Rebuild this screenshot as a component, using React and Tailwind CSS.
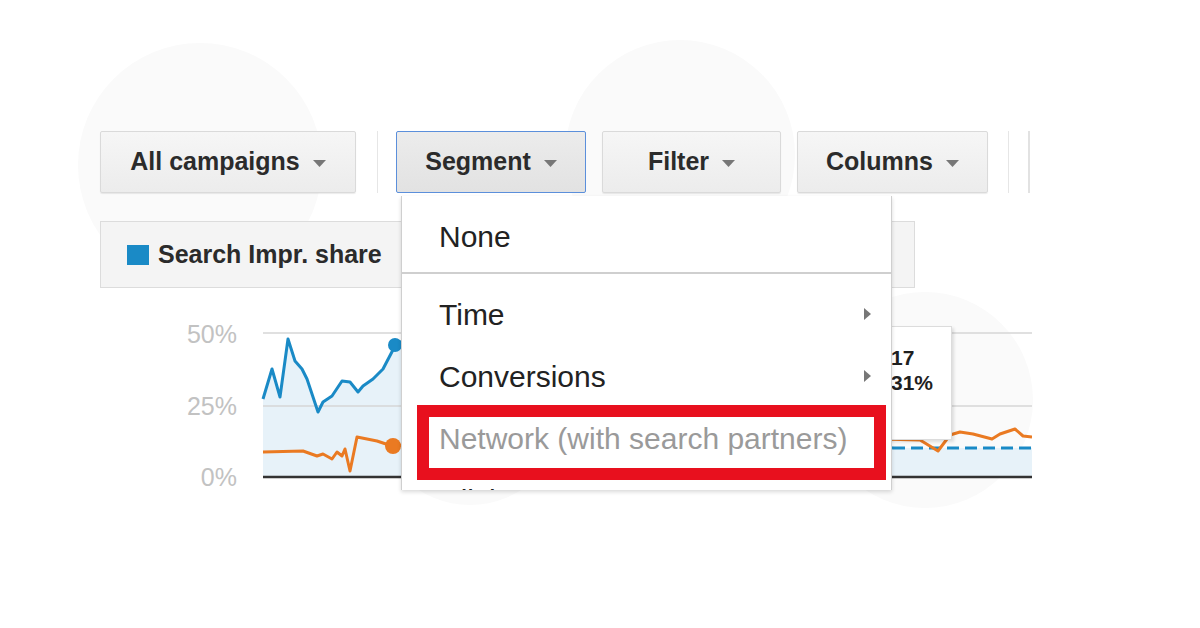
import { Fragment } from 'react'

const Caret = () => (
  <svg width="13" height="7" viewBox="0 0 13 7" className="mt-[3px]">
    <path d="M0 0h13L6.5 7z" fill="#777" />
  </svg>
)

const ToolButton = ({ label, width, active }) => (
  <button
    type="button"
    className={`flex h-full items-center justify-center gap-[13px] rounded-[2px] border bg-gradient-to-b text-[25px] font-bold text-[#2b2b2b] ${width} ${
      active
        ? 'border-[#5b8fdb] from-[#ececec] to-[#e2e2e2]'
        : 'border-[#dadada] from-[#f6f6f6] to-[#ececec] shadow-[0_1px_1px_rgba(0,0,0,0.08)]'
    }`}
  >
    {label}
    <Caret />
  </button>
)

const SubArrow = () => (
  <svg width="7" height="12" viewBox="0 0 7 12">
    <path d="M0 0l7 6-7 6z" fill="#777" />
  </svg>
)

const blue = [
  [263, 400], [272, 370], [280, 398], [288, 340], [295, 362], [302, 370], [307, 380],
  [318, 413], [323, 403], [332, 397], [342, 382], [350, 383], [358, 393], [363, 387],
  [373, 380], [383, 370], [395, 347], [420, 330], [500, 360], [600, 420], [893, 449],
]

const orangeLeft = [
  [263, 453], [303, 452], [317, 457], [323, 455], [332, 460], [337, 453], [342, 457],
  [345, 450], [350, 472], [357, 438], [377, 442], [392, 447], [420, 445],
]

const orangeRight = [
  [880, 440], [920, 441], [938, 452], [950, 436], [960, 433], [973, 435], [992, 440],
  [1000, 435], [1015, 430], [1023, 437], [1032, 438],
]

const pts = (arr) => arr.map((p) => p.join(',')).join(' ')

const Chart = () => (
  <svg width="932" height="200" viewBox="100 300 932 200" className="block">
    <path
      d={`M${pts(blue)} L1032,449 L1032,478 L263,478 Z`}
      fill="#e7f2f9"
    />
    <line x1="263" y1="334" x2="1032" y2="334" stroke="#d6d6d6" strokeWidth="1.5" />
    <line x1="263" y1="407" x2="1032" y2="407" stroke="#d6d6d6" strokeWidth="1.5" />
    <polyline points={pts(blue)} fill="none" stroke="#1a8ac6" strokeWidth="3" strokeLinejoin="round" />
    <line x1="893" y1="449" x2="1032" y2="449" stroke="#1a8ac6" strokeWidth="3" strokeDasharray="12 6" />
    <polyline points={pts(orangeLeft)} fill="none" stroke="#ea7a22" strokeWidth="3" strokeLinejoin="round" />
    <polyline points={pts(orangeRight)} fill="none" stroke="#ea7a22" strokeWidth="3" strokeLinejoin="round" />
    <circle cx="395" cy="346" r="7" fill="#1a8ac6" />
    <circle cx="393" cy="447" r="8" fill="#ea7a22" />
    <line x1="263" y1="478" x2="1032" y2="478" stroke="#333" strokeWidth="2.5" />
    {[
      ['50%', 344],
      ['25%', 416],
      ['0%', 487],
    ].map(([t, y]) => (
      <text
        key={t}
        x="237"
        y={y}
        textAnchor="end"
        fontSize="25"
        fill="#c2c2c2"
        fontFamily="'Liberation Sans', Arial, sans-serif"
      >
        {t}
      </text>
    ))}
  </svg>
)

const App = () => {
  return (
    <div className="relative h-[628px] w-[1200px] overflow-hidden bg-white font-['Liberation_Sans',Arial,sans-serif]">
      {/* faint watermark */}
      <svg className="absolute inset-0" width="1200" height="628">
        <circle cx="200" cy="165" r="122" fill="#fafafa" />
        <circle cx="680" cy="155" r="115" fill="#fafafa" />
        <circle cx="470" cy="410" r="95" fill="#fafafa" />
        <circle cx="925" cy="400" r="108" fill="#fafafa" />
      </svg>

      <div className="relative flex flex-col pl-[100px] pt-[131px]">
        <div className="flex h-[62px] items-stretch">
          <ToolButton label="All campaigns" width="w-[256px]" />
          <div className="ml-[21px] mr-[18px] w-px bg-[#e6e6e6]" />
          <ToolButton label="Segment" width="w-[190px]" active />
          <div className="ml-[16px]" />
          <ToolButton label="Filter" width="w-[179px]" />
          <div className="ml-[16px]" />
          <ToolButton label="Columns" width="w-[191px]" />
          <div className="ml-[20px] w-px bg-[#e6e6e6]" />
          <div className="ml-[19px] w-[2px] bg-[#e2e2e2]" />
        </div>

        <div className="mt-[28px] flex h-[67px] w-[815px] items-center gap-[9px] border border-[#dcdcdc] bg-[#f4f4f4] pl-[26px]">
          <span className="h-[20px] w-[22px] bg-[#1a8ac6]" />
          <span className="text-[25px] font-bold text-[#2b2b2b]">Search Impr. share</span>
        </div>

        <div className="mt-[11px]">
          <Chart />
        </div>
      </div>

      {/* hover tooltip */}
      <div className="absolute left-[855px] top-[326px] h-[114px] w-[97px] border border-[#dcdcdc] bg-white pl-[35px] pt-[18px] text-[21px] font-bold leading-[25px] text-[#1f1f1f] shadow-[2px_2px_3px_rgba(0,0,0,0.12)]">
        <div>17</div>
        <div>31%</div>
      </div>

      {/* segment dropdown */}
      <div className="absolute left-[401px] top-[196px] h-[294px] w-[491px] overflow-hidden border-x border-[#cfcfcf] bg-white text-[30px] text-[#222] shadow-[0_2px_4px_rgba(0,0,0,0.15)]">
        <div className="flex h-[78px] items-center border-b-2 border-[#cfcfcf] pl-[37px] pt-[4px]">None</div>
        <div className="pt-[9px]">
          {[
            ['Time', true, false],
            ['Conversions', true, false],
            ['Network (with search partners)', false, true],
            ['Click type', false, false],
          ].map(([t, sub, dim]) => (
            <Fragment key={t}>
              <div
                className={`flex h-[62px] items-center justify-between pl-[37px] pr-[20px] ${
                  dim ? 'text-[#9a9a9a]' : ''
                }`}
              >
                <span>{t}</span>
                {sub && <SubArrow />}
              </div>
            </Fragment>
          ))}
        </div>
      </div>

      {/* highlight */}
      <div className="absolute left-[417px] top-[405px] h-[75px] w-[469px] border-[12px] border-[#e8101e]" />
    </div>
  )
}

export default App
